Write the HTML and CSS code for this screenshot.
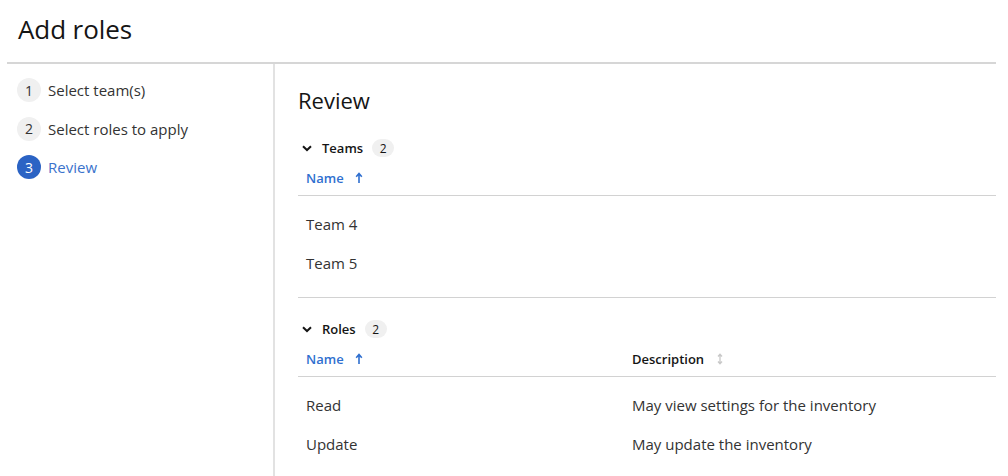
FILE: index.html
```html
<!DOCTYPE html>
<html lang="en">
<head>
<meta charset="utf-8">
<title>Add roles</title>
<link rel="stylesheet" href="styles.css">
</head>
<body>
<div class="page">
  <header class="page-header">
    <h1 class="title">Add roles</h1>
  </header>
  <div class="wizard">
    <nav class="steps">
      <div class="step"><span class="step-num">1</span><span class="step-label">Select team(s)</span></div>
      <div class="step"><span class="step-num">2</span><span class="step-label">Select roles to apply</span></div>
      <div class="step current"><span class="step-num">3</span><span class="step-label">Review</span></div>
    </nav>
    <main class="content">
      <h2 class="review-title">Review</h2>

      <section class="group">
        <div class="toggle">
          <svg class="chevron" viewBox="0 0 10 7" width="10" height="7"><path d="M1 1.2 L5 5 L9 1.2" fill="none" stroke="#151515" stroke-width="2"/></svg>
          <span class="toggle-label">Teams</span>
          <span class="badge">2</span>
        </div>
        <div class="table">
          <div class="thead">
            <div class="th sorted">Name
              <svg class="sort" viewBox="0 0 8 12" width="8" height="12"><path d="M4 11 V2 M1.2 4.8 L4 1.5 L6.8 4.8" fill="none" stroke="currentColor" stroke-width="1.6"/></svg>
            </div>
          </div>
          <div class="tbody">
            <div class="tr"><div class="td">Team 4</div></div>
            <div class="tr"><div class="td">Team 5</div></div>
          </div>
        </div>
      </section>

      <section class="group">
        <div class="toggle">
          <svg class="chevron" viewBox="0 0 10 7" width="10" height="7"><path d="M1 1.2 L5 5 L9 1.2" fill="none" stroke="#151515" stroke-width="2"/></svg>
          <span class="toggle-label">Roles</span>
          <span class="badge">2</span>
        </div>
        <div class="table">
          <div class="thead two">
            <div class="th sorted">Name
              <svg class="sort" viewBox="0 0 8 12" width="8" height="12"><path d="M4 11 V2 M1.2 4.8 L4 1.5 L6.8 4.8" fill="none" stroke="currentColor" stroke-width="1.6"/></svg>
            </div>
            <div class="th">Description
              <svg class="sort muted" viewBox="0 0 8 12" width="8" height="12"><path d="M4 1.5 V10.5 M2 3.5 L4 1.2 L6 3.5 M2 8.5 L4 10.8 L6 8.5" fill="none" stroke="currentColor" stroke-width="1.3"/></svg>
            </div>
          </div>
          <div class="tbody open">
            <div class="tr two"><div class="td">Read</div><div class="td">May view settings for the inventory</div></div>
            <div class="tr two"><div class="td">Update</div><div class="td">May update the inventory</div></div>
          </div>
        </div>
      </section>
    </main>
  </div>
</div>
</body>
</html>
```

FILE: styles.css
```css
* { box-sizing: border-box; }
html, body { margin: 0; padding: 0; background: #fff; }
body {
  font-family: "Open Sans", "Liberation Sans", sans-serif;
  color: #151515;
  height: 476px;
  overflow: hidden;
}
.page {
  margin: 0 12px 0 7px;
  height: 476px;
  display: flex;
  flex-direction: column;
}
.page-header {
  flex-shrink: 0;
  padding: 12px 0 0 11px;
  height: 64px;
  border-bottom: 2px solid #d6d6d6;
}
.title {
  margin: 0;
  font-family: "Open Sans", sans-serif;
  font-weight: 400;
  font-size: 26px;
  line-height: 34px;
  letter-spacing: -0.1px;
  color: #151515;
}
.wizard {
  flex: 1;
  min-height: 0;
  display: flex;
  overflow: hidden;
}
.steps {
  width: 268px;
  flex-shrink: 0;
  border-right: 2px solid #e2e2e2;
  padding: 14px 0 0 10px;
  display: flex;
  flex-direction: column;
  gap: 14.5px;
}
.step {
  display: flex;
  align-items: center;
  gap: 7px;
  height: 24px;
}
.step-num {
  width: 24px;
  height: 24px;
  border-radius: 50%;
  background: #f0f0f0;
  color: #333;
  font-size: 14px;
  display: flex;
  align-items: center;
  justify-content: center;
}
.step-label {
  font-size: 15px;
  color: #333;
}
.step.current .step-num { background: #2b63c4; color: #fff; }
.step.current .step-label { color: #3b73cc; }

.content {
  flex: 1;
  padding: 22px 0 0 23px;
}
.review-title {
  margin: 0 0 22px;
  font-weight: 400;
  font-size: 22px;
  line-height: 28px;
  color: #151515;
}
.group + .group { margin-top: 19px; }
.toggle {
  height: 24px;
  display: flex;
  align-items: center;
  padding-left: 4px;
}
.chevron { margin-right: 10px; }
.toggle-label {
  font-size: 13px;
  font-weight: 600;
  color: #151515;
}
.badge {
  margin-left: 9px;
  min-width: 22px;
  height: 18px;
  padding: 0 7px;
  border-radius: 9px;
  background: #f0f0f0;
  font-size: 12px;
  color: #151515;
  display: flex;
  align-items: center;
  justify-content: center;
}
.table { width: 100%; }
.thead {
  display: grid;
  grid-template-columns: 326px 1fr;
  height: 36px;
  align-items: center;
  border-bottom: 1px solid #d2d2d2;
}
.th {
  padding-left: 8px;
  font-size: 13px;
  font-weight: 600;
  line-height: 20px;
  color: #151515;
  display: flex;
  align-items: center;
}
.th.sorted { color: #2f6fcf; }
.sort { margin-left: 11px; color: #2f6fcf; }
.sort.muted { color: #c8c8c8; margin-left: 12px; }
.tbody {
  padding: 8px 0 15px;
  border-bottom: 1px solid #d2d2d2;
}
.tbody.open { border-bottom: none; }
.tr {
  display: grid;
  grid-template-columns: 326px 1fr;
  height: 39px;
  align-items: center;
}
.td {
  padding-left: 8px;
  font-size: 15px;
  color: #333;
}
```
